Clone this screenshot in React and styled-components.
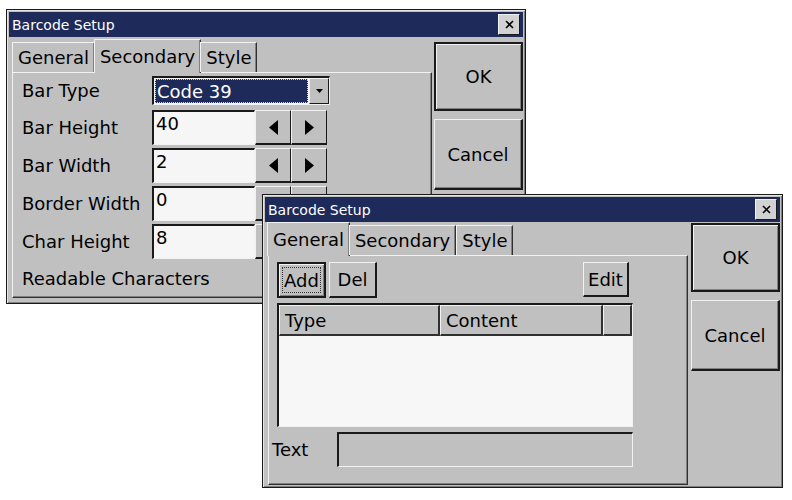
import React from 'react';
import styled, { createGlobalStyle, css } from 'styled-components';

const GlobalStyle = createGlobalStyle`
  html, body { margin: 0; padding: 0; background: #fff; }
  body { width: 792px; height: 500px; overflow: hidden; font-family: "DejaVu Sans", sans-serif; color: #000; }
`;

const GRAY = '#c0c0c0';
const NAVY = '#1d2a5a';
const DARK = '#1a1a1a';
const LIGHT = '#f2f2f2';

const Desktop = styled.div`
  position: relative;
  width: 792px;
  height: 500px;
  background: #fff;
`;

const Window = styled.div`
  position: absolute;
  left: ${p => p.$x}px;
  top: ${p => p.$y}px;
  width: ${p => p.$w}px;
  height: ${p => p.$h}px;
  box-sizing: border-box;
  background: ${GRAY};
  border: 1px solid ${DARK};
  box-shadow: inset 1px 1px #e6e6e6, inset -1px -1px #808080;
  padding: 2px;
  display: flex;
  flex-direction: column;
`;

const TitleBar = styled.div`
  flex: none;
  height: 25px;
  background: ${NAVY};
  color: #fff;
  font-size: 14px;
  display: flex;
  align-items: center;
  justify-content: space-between;
  padding: 0 3px;
`;

const CloseButton = styled.div`
  width: 22px;
  height: 21px;
  box-sizing: border-box;
  background: #d2d2d2;
  border: 1px solid;
  border-color: ${LIGHT} ${DARK} ${DARK} ${LIGHT};
  display: flex;
  align-items: center;
  justify-content: center;
`;

const Body = styled.div`
  flex: 1;
  min-height: 0;
  display: flex;
  justify-content: space-between;
  padding: 0 0 ${p => p.$padB}px 3px;
`;

const Main = styled.div`
  width: 420px;
  display: flex;
  flex-direction: column;
  padding-top: ${p => p.$top}px;
`;

const TabRow = styled.div`
  display: flex;
  align-items: flex-end;
  height: 33px;
  flex: none;
  position: relative;
  z-index: 1;
`;

const Tab = styled.div`
  box-sizing: border-box;
  background: ${GRAY};
  font-size: 18px;
  display: flex;
  align-items: center;
  border: 1px solid;
  border-bottom: none;
  border-color: ${LIGHT} #303030 transparent ${LIGHT};
  box-shadow: inset -1px 0 #808080;
  ${p => p.$active ? css`
    height: 34px;
    padding: 0 5px;
    margin: 0 -1px -1px;
  ` : css`
    height: 30px;
    padding: 0 5px;
  `}
`;

const Panel = styled.div`
  flex: 1;
  box-sizing: border-box;
  border: 1px solid;
  border-color: ${LIGHT} #303030 #303030 ${LIGHT};
  box-shadow: inset -1px -1px #808080;
  display: flex;
  flex-direction: column;
`;

const Side = styled.div`
  width: 89px;
  display: flex;
  flex-direction: column;
  gap: 8px;
  padding-top: ${p => p.$top}px;
`;

const DialogButton = styled.div`
  box-sizing: border-box;
  height: ${p => p.$h}px;
  background: ${GRAY};
  font-size: 18px;
  display: flex;
  align-items: center;
  justify-content: center;
  ${p => p.$default ? css`
    border: 2px solid ${DARK};
    box-shadow: inset 1px 1px ${LIGHT}, inset -1px -1px #808080;
  ` : css`
    border-style: solid;
    border-width: 1px 2px 2px 1px;
    border-color: ${LIGHT} ${DARK} ${DARK} ${LIGHT};
    box-shadow: inset -1px -1px #808080;
  `}
`;

/* ---------- Secondary tab (window 1) ---------- */

const Form = styled.div`
  display: flex;
  flex-direction: column;
  padding: 3px 0 0 9px;
`;

const FormRow = styled.div`
  display: flex;
  align-items: center;
  height: ${p => p.$h}px;
  margin-top: ${p => p.$mt}px;
`;

const FieldLabel = styled.div`
  flex: none;
  width: ${p => p.$w}px;
  font-size: 18px;
  white-space: nowrap;
`;

const Combo = styled.div`
  display: flex;
  width: 178px;
  height: 29px;
  box-sizing: border-box;
  border-style: solid;
  border-width: 2px 1px 1px 2px;
  border-color: ${DARK} ${LIGHT} ${LIGHT} ${DARK};
  background: #f6f6f6;
`;

const ComboValue = styled.div`
  flex: 1;
  margin: 1px;
  background: ${NAVY};
  color: #fff;
  font-size: 18px;
  display: flex;
  align-items: center;
  padding-left: 2px;
  outline: 1px dotted #d8d8b0;
  outline-offset: -1px;
`;

const ComboArrow = styled.div`
  width: 20px;
  box-sizing: border-box;
  background: ${GRAY};
  border: 1px solid;
  border-color: ${LIGHT} ${DARK} ${DARK} ${LIGHT};
  display: flex;
  align-items: center;
  justify-content: center;
`;

const TextBox = styled.div`
  box-sizing: border-box;
  width: ${p => p.$w}px;
  height: 35px;
  border-style: solid;
  border-width: 2px 1px 1px 2px;
  border-color: ${DARK} ${LIGHT} ${LIGHT} ${DARK};
  background: ${p => p.$disabled ? GRAY : '#f6f6f6'};
  font-size: 18px;
  line-height: 21px;
  padding: 1px 0 0 2px;
`;

const SpinButton = styled.div`
  width: 36px;
  height: 35px;
  box-sizing: border-box;
  background: ${GRAY};
  border-style: solid;
  border-width: 1px 1px 2px 1px;
  border-color: ${LIGHT} ${DARK} ${DARK} ${LIGHT};
  display: flex;
  align-items: center;
  justify-content: center;
`;

/* ---------- General tab (window 2) ---------- */

const Toolbar = styled.div`
  display: flex;
  gap: 3px;
  width: 356px;
  margin: 6px 0 0 8px;
`;

const ToolButton = styled.div`
  box-sizing: border-box;
  width: ${p => p.$w}px;
  height: ${p => p.$h}px;
  background: ${GRAY};
  font-size: 18px;
  display: flex;
  align-items: center;
  justify-content: center;
  position: relative;
  ${p => p.$end && css`margin-left: auto; margin-right: 4px;`}
  ${p => p.$focused ? css`
    border: 2px solid ${DARK};
    box-shadow: inset 1px 1px ${LIGHT}, inset -1px -1px #808080;
    &::after {
      content: '';
      position: absolute;
      inset: 3px;
      border: 1px dotted #333;
    }
  ` : css`
    border-style: solid;
    border-width: 1px 2px 2px 1px;
    border-color: ${LIGHT} ${DARK} ${DARK} ${LIGHT};
  `}
`;

const ListView = styled.div`
  box-sizing: border-box;
  width: 356px;
  height: 124px;
  margin: 5px 0 0 8px;
  border-style: solid;
  border-width: 2px 1px 1px 2px;
  border-color: ${DARK} ${LIGHT} ${LIGHT} ${DARK};
  background: #f7f7f7;
  display: flex;
  flex-direction: column;
`;

const ListHeader = styled.div`
  display: flex;
  height: 31px;
  flex: none;
`;

const HeaderCell = styled.div`
  box-sizing: border-box;
  width: ${p => p.$w}px;
  height: 31px;
  background: ${GRAY};
  border-style: solid;
  border-width: 1px 2px 2px 1px;
  border-color: ${LIGHT} #303030 #303030 ${LIGHT};
  font-size: 18px;
  display: flex;
  align-items: center;
  padding-left: 5px;
`;

const TextRow = styled.div`
  display: flex;
  align-items: center;
  margin: 5px 0 0 3px;
`;

const Tri = ({ dir, w = 9, h = 15 }) => {
  const pts = {
    left: `${w},0 ${w},${h} 0,${h / 2}`,
    right: `0,0 0,${h} ${w},${h / 2}`,
    down: `0,0 ${w},0 ${w / 2},${h}`,
  }[dir];
  return (
    <svg width={w} height={h} viewBox={`0 0 ${w} ${h}`}>
      <polygon points={pts} fill="#000" />
    </svg>
  );
};

const CloseIcon = () => (
  <svg width="9" height="9" viewBox="0 0 9 9">
    <path d="M1 1 L8 8 M8 1 L1 8" stroke="#000" strokeWidth="1.6" fill="none" />
  </svg>
);

const SpinRow = ({ label, value, mt }) => (
  <FormRow $h={35} $mt={mt}>
    <FieldLabel $w={130}>{label}</FieldLabel>
    <TextBox $w={103}>{value}</TextBox>
    <SpinButton><Tri dir="left" /></SpinButton>
    <SpinButton><Tri dir="right" /></SpinButton>
  </FormRow>
);

const Dialog = ({ x, y, w, h, tabTop, sideTop, padB, active, children }) => (
  <Window $x={x} $y={y} $w={w} $h={h}>
    <TitleBar>
      <span>Barcode Setup</span>
      <CloseButton><CloseIcon /></CloseButton>
    </TitleBar>
    <Body $padB={padB}>
      <Main $top={tabTop}>
        <TabRow>
          {['General', 'Secondary', 'Style'].map(t => (
            <Tab key={t} $active={t === active}>{t}</Tab>
          ))}
        </TabRow>
        <Panel>{children}</Panel>
      </Main>
      <Side $top={sideTop}>
        <DialogButton $default $h={69}>OK</DialogButton>
        <DialogButton $h={71}>Cancel</DialogButton>
      </Side>
    </Body>
  </Window>
);

export default function App() {
  return (
    <>
      <GlobalStyle />
      <Desktop>
        <Dialog x={6} y={9} w={520} h={295} tabTop={2} sideTop={5} padB={3} active="Secondary">
          <Form>
            <FormRow $h={29} $mt={0}>
              <FieldLabel $w={130}>Bar Type</FieldLabel>
              <Combo>
                <ComboValue>Code 39</ComboValue>
                <ComboArrow><Tri dir="down" w={7} h={4} /></ComboArrow>
              </Combo>
            </FormRow>
            <SpinRow label="Bar Height" value="40" mt={5} />
            <SpinRow label="Bar Width" value="2" mt={3} />
            <SpinRow label="Border Width" value="0" mt={3} />
            <SpinRow label="Char Height" value="8" mt={3} />
            <FormRow $h={32} $mt={3}>
              <FieldLabel $w={260}>Readable Characters</FieldLabel>
            </FormRow>
          </Form>
        </Dialog>

        <Dialog x={262} y={194} w={521} h={294} tabTop={0} sideTop={1} padB={0} active="General">
          <Toolbar>
            <ToolButton $w={49} $h={36} $focused>Add</ToolButton>
            <ToolButton $w={48} $h={36}>Del</ToolButton>
            <ToolButton $w={46} $h={35} $end>Edit</ToolButton>
          </Toolbar>
          <ListView>
            <ListHeader>
              <HeaderCell $w={161}>Type</HeaderCell>
              <HeaderCell $w={163}>Content</HeaderCell>
              <HeaderCell $w={29} />
            </ListHeader>
          </ListView>
          <TextRow>
            <FieldLabel $w={65}>Text</FieldLabel>
            <TextBox $w={296} $disabled />
          </TextRow>
        </Dialog>
      </Desktop>
    </>
  );
}
